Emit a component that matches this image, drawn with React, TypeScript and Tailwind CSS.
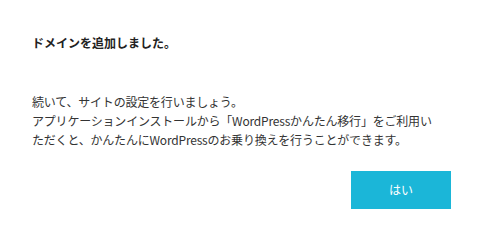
export default function App() {
  return (
    <div
      className="w-[485px] h-[243px] bg-white pl-[32px] pr-[34px] pt-[34px] flex flex-col text-[#333]"
      style={{ fontFamily: '"Noto Sans CJK JP", "Noto Sans", sans-serif' }}
    >
      <h2 className="text-[12px] leading-[18px] font-bold text-[#222]">ドメインを追加しました。</h2>
      <p className="mt-[40px] text-[12px] leading-[19px] tracking-[-0.2px]">
        続いて、サイトの設定を行いましょう。
        <br />
        アプリケーションインストールから「WordPressかんたん移行」をご利用い
        <br />
        ただくと、かんたんにWordPressのお乗り換えを行うことができます。
      </p>
      <div className="mt-[22px] flex justify-end">
        <button className="w-[100px] h-[38px] bg-[#1bb6d8] text-white text-[12px]">はい</button>
      </div>
    </div>
  );
}
